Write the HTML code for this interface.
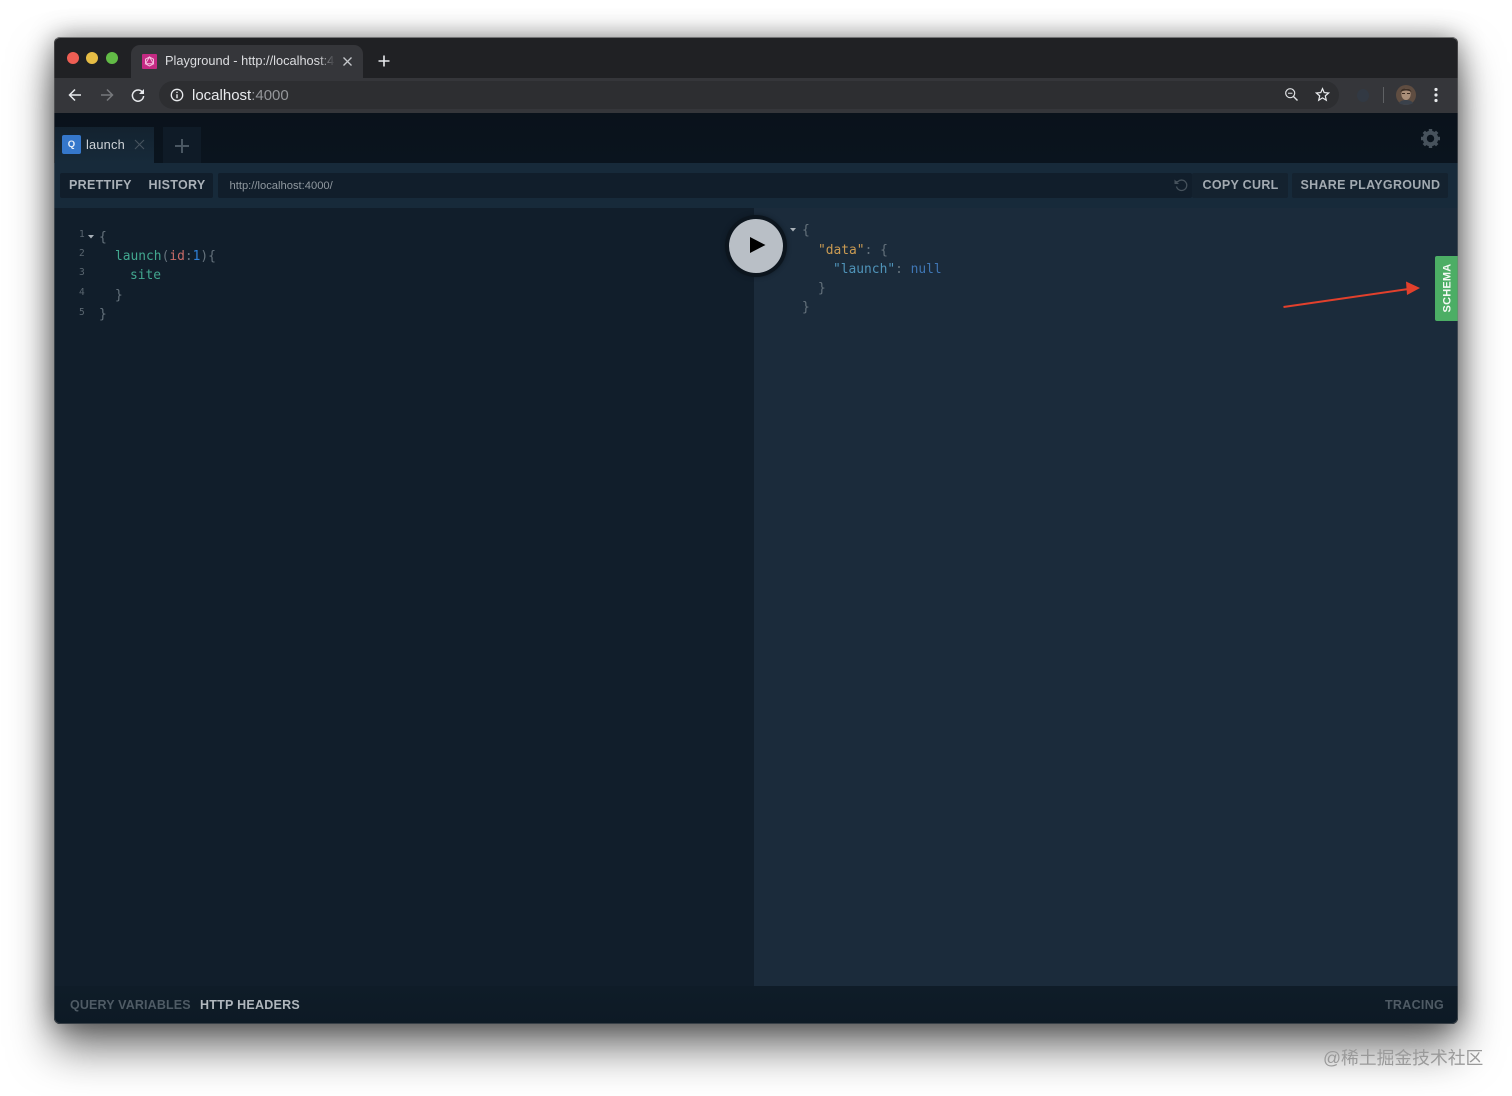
<!DOCTYPE html>
<html><head><meta charset="utf-8"><style>
html,body{margin:0;padding:0;width:1512px;height:1096px;overflow:hidden;background:#fff}
*{box-sizing:border-box}
.a{position:absolute;white-space:nowrap}
#w{position:absolute;left:54px;top:37px;width:1404px;height:987px;border-radius:6px;background:#202124;box-shadow:0 24px 44px rgba(0,0,0,.55),0 0 26px rgba(0,0,0,.42);overflow:hidden}
.t{font-family:"Liberation Sans",sans-serif}
.b{font-family:"Liberation Sans",sans-serif;font-weight:700;font-size:12.5px;letter-spacing:.3px;line-height:14px}
.m{font-family:"DejaVu Sans Mono","Liberation Mono",monospace;font-size:12.9px;line-height:16px;white-space:pre;position:absolute}
.n{font-family:"DejaVu Sans Mono",monospace;font-size:9.5px;line-height:12px;color:#5a6670;position:absolute}
</style></head><body>
<div id="w">
 <div class="a" style="left:0;top:41px;width:1404px;height:35px;background:#35363a"></div>
 <div class="a" style="left:77px;top:8px;width:232px;height:33px;background:#35363a;border-radius:9px 9px 0 0"></div>
 <div class="a" style="left:13px;top:15px;width:12px;height:12px;border-radius:50%;background:#ee5e54"></div>
 <div class="a" style="left:32px;top:15px;width:12px;height:12px;border-radius:50%;background:#e6bd45"></div>
 <div class="a" style="left:52px;top:15px;width:12px;height:12px;border-radius:50%;background:#62bb46"></div>
 <div class="a" style="left:88px;top:17px;width:15px;height:15px;background:#c52a83;border-radius:1px"></div>
 <svg class="a" style="left:88px;top:17px" width="15" height="15" viewBox="0 0 15 15"><path d="M7.5 3 11.5 5.2V9.800L7.500 12 3.500 9.800V5.200ZM7.500 3 3.500 9.800H11.500Z" fill="none" stroke="#f3bcdc" stroke-width="1"/></svg>
 <div class="a t" style="left:111px;top:16px;font-size:12.8px;line-height:16px;color:#dcdde0;width:172px;overflow:hidden">Playground - http://localhost:4000</div>
 <div class="a" style="left:264px;top:14px;width:20px;height:20px;background:linear-gradient(90deg,rgba(53,54,58,0),#35363a 85%)"></div>
 <svg class="a" style="left:288px;top:19px" width="11" height="11" viewBox="0 0 11 11"><path d="M1.500 1.500 9.500 9.500M9.500 1.500 1.500 9.500" stroke="#c5c7ca" stroke-width="1.300"/></svg>
 <svg class="a" style="left:323px;top:17px" width="14" height="14" viewBox="0 0 14 14"><path d="M7 1.500V12.500M1.500 7H12.500" stroke="#e8eaed" stroke-width="1.600"/></svg>
 <svg class="a" style="left:14px;top:51px" width="14" height="14" viewBox="0 0 14 14"><path d="M13 7H1.800M7 1.500 1.500 7 7 12.500" fill="none" stroke="#e8eaed" stroke-width="1.500"/></svg>
 <svg class="a" style="left:46px;top:51px" width="14" height="14" viewBox="0 0 14 14"><path d="M1 7H12.200M7 1.500 12.500 7 7 12.500" fill="none" stroke="#77797c" stroke-width="1.500"/></svg>
 <svg class="a" style="left:77px;top:51px" width="14" height="14" viewBox="0 0 14 14"><path d="M12 5A5.600 5.600 0 1 0 12.600 8" fill="none" stroke="#e8eaed" stroke-width="1.500"/><path d="M13 1V6H8Z" fill="#e8eaed"/></svg>
 <div class="a" style="left:105px;top:44px;width:1180px;height:28px;border-radius:14px;background:#2d2e31"></div>
 <svg class="a" style="left:116px;top:51px" width="14" height="14" viewBox="0 0 14 14"><circle cx="7" cy="7" r="5.700" fill="none" stroke="#e8eaed" stroke-width="1.300"/><path d="M7 6.200V10.200M7 3.800V5" stroke="#e8eaed" stroke-width="1.400"/></svg>
 <div class="a t" style="left:138px;top:50px;font-size:15px;line-height:18px;color:#e8eaed">localhost<span style="color:#94969a">:4000</span></div>
 <svg class="a" style="left:1230px;top:50px" width="15" height="15" viewBox="0 0 15 15"><circle cx="6.200" cy="6.200" r="4.500" fill="none" stroke="#dfe1e4" stroke-width="1.200"/><path d="M9.600 9.600 13.500 13.500" stroke="#dfe1e4" stroke-width="1.400"/><path d="M4 6.200H8.400" stroke="#dfe1e4" stroke-width="1"/></svg>
 <svg class="a" style="left:1261px;top:50px" width="15" height="15" viewBox="0 0 15 15"><path d="M7.500 1.600 9.200 5.600 13.600 6 10.300 8.900 11.300 13.200 7.500 10.900 3.700 13.200 4.700 8.900 1.400 6 5.800 5.600Z" fill="none" stroke="#e8eaed" stroke-width="1.200"/></svg>
 <div class="a" style="left:1303px;top:52px;width:12px;height:13px;border-radius:50%;background:#2f3c4a;opacity:.55"></div>
 <div class="a" style="left:1329px;top:50px;width:1px;height:16px;background:#5f6164"></div>
 <svg class="a" style="left:1342px;top:48px" width="20" height="20" viewBox="0 0 20 20"><circle cx="10" cy="10" r="10" fill="#5f4d41"/><ellipse cx="10" cy="9" rx="4.700" ry="6" fill="#a98e79"/><path d="M4.500 7C5 2.500 14 2 15.500 7 12 5 8 5 4.500 7Z" fill="#3d2f26"/><path d="M3 18C5 14 15 14 17 18 14 20.500 6 20.500 3 18Z" fill="#3a414b"/><path d="M6 8.500H9M11 8.500H14" stroke="#3a2a20" stroke-width="1"/></svg>
 <svg class="a" style="left:1379px;top:50px" width="6" height="16" viewBox="0 0 6 16"><circle cx="3" cy="2.500" r="1.600" fill="#e8eaed"/><circle cx="3" cy="8" r="1.600" fill="#e8eaed"/><circle cx="3" cy="13.500" r="1.600" fill="#e8eaed"/></svg>

 <!-- app -->
 <div class="a" style="left:0;top:76px;width:1404px;height:50px;background:linear-gradient(#0a121b,#0a141e)"></div>
 <div class="a" style="left:1px;top:90px;width:99px;height:36px;background:linear-gradient(180deg,#13222f,#172a3a)"></div>
 <div class="a" style="left:109px;top:90px;width:38px;height:36px;background:#0f1b27"></div>
 <div class="a t" style="left:8px;top:98px;width:19px;height:19px;border-radius:2px;background:#3577cb;color:#e6eef8;font-size:9.500px;font-weight:700;line-height:19px;text-align:center">Q</div>
 <div class="a t" style="left:32px;top:100px;font-size:12.800px;line-height:16px;color:#ced3d8;letter-spacing:.2px">launch</div>
 <svg class="a" style="left:80px;top:102px" width="11" height="11" viewBox="0 0 11 11"><path d="M1 1 10 10M10 1 1 10" stroke="#46535e" stroke-width="1.100"/></svg>
 <svg class="a" style="left:120px;top:101px" width="16" height="16" viewBox="0 0 16 16"><path d="M8 1V15M1 8H15" stroke="#4a5762" stroke-width="2"/></svg>
 <svg class="a" style="left:1366px;top:91px" width="21" height="21" viewBox="0 0 21 21"><circle cx="10.500" cy="10.500" r="5.700" fill="none" stroke="#47525c" stroke-width="4"/><path d="M10.500 1V4M10.500 17V20M1 10.500H4M17 10.500H20M3.800 3.800 5.900 5.900M15.100 15.100 17.200 17.200M17.200 3.800 15.100 5.900M5.900 15.100 3.800 17.200" stroke="#47525c" stroke-width="3.400"/></svg>

 <div class="a" style="left:0;top:126px;width:1404px;height:45px;background:#172a3a"></div>
 <div class="a" style="left:6px;top:136px;width:153px;height:25px;background:#111e2b;border-radius:2px"></div>
 <div class="a" style="left:164px;top:136px;width:974px;height:25px;background:#111e2b;border-radius:2px"></div>
 <div class="a" style="left:1138px;top:136px;width:96px;height:25px;background:#14222f;border-radius:2px"></div>
 <div class="a" style="left:1238px;top:136px;width:156px;height:25px;background:#14222f;border-radius:2px"></div>
 <div class="a b" style="left:15px;top:141px;color:#aab1b8">PRETTIFY</div>
 <div class="a b" style="left:94.500px;top:141px;color:#aab1b8">HISTORY</div>
 <div class="a t" style="left:175.500px;top:142px;font-size:11.200px;line-height:14px;color:#8f989f">http://localhost:4000/</div>
 <svg class="a" style="left:1119px;top:140px" width="16" height="16" viewBox="0 0 16 16"><path d="M3.500 9.500A5.200 5.200 0 1 0 5 4.500L2 5" fill="none" stroke="#46525c" stroke-width="1.300"/><path d="M1.500 2.500V7H6Z" fill="#46525c"/></svg>
 <div class="a b" style="left:1148.500px;top:141px;color:#a2aab1">COPY CURL</div>
 <div class="a b" style="left:1246.500px;top:141px;color:#a2aab1">SHARE PLAYGROUND</div>

 <div class="a" style="left:0;top:171px;width:700px;height:778px;background:#111e2b"></div>
 <div class="a" style="left:700px;top:171px;width:704px;height:778px;background:#1b2b3b"></div>
 <div class="a" style="left:0;top:949px;width:1404px;height:38px;background:linear-gradient(#0f1c28,#0d1a25)"></div>

 <div class="n" style="left:25px;top:192px">1</div>
 <div class="n" style="left:25px;top:211px">2</div>
 <div class="n" style="left:25px;top:230px">3</div>
 <div class="n" style="left:25px;top:250px">4</div>
 <div class="n" style="left:25px;top:270px">5</div>
 <svg class="a" style="left:33px;top:197px" width="8" height="6"><path d="M1 1H7L4 4.500Z" fill="#a9b1b8"/></svg>
 <div class="m" style="left:45px;top:193px;color:#65727c">{</div>
 <div class="m" style="left:61px;top:212px;color:#65727c"><span style="color:#42a78f">launch</span>(<span style="color:#c96b68">id</span>:<span style="color:#2f80d8">1</span>){</div>
 <div class="m" style="left:76px;top:231px;color:#42a78f">site</div>
 <div class="m" style="left:61px;top:251px;color:#65727c">}</div>
 <div class="m" style="left:45px;top:270px;color:#65727c">}</div>

 <svg class="a" style="left:735px;top:190px" width="8" height="6"><path d="M1 1H7L4 4.500Z" fill="#a9b1b8"/></svg>
 <div class="m" style="left:748px;top:186px;color:#65727c">{</div>
 <div class="m" style="left:764px;top:205.500px;color:#65727c"><span style="color:#c99a52">"data"</span>: {</div>
 <div class="m" style="left:779px;top:225px;color:#65727c"><span style="color:#4f93b8">"launch"</span>: <span style="color:#3f76b4">null</span></div>
 <div class="m" style="left:764px;top:244px;color:#65727c">}</div>
 <div class="m" style="left:748px;top:263px;color:#65727c">}</div>

 <div class="a" style="left:671px;top:178px;width:62px;height:62px;border-radius:50%;background:#0c151e;box-shadow:0 0 4px rgba(12,21,30,.7)"></div>
 <div class="a" style="left:675px;top:182px;width:54px;height:54px;border-radius:50%;background:#b9bfc6"></div>
 <svg class="a" style="left:695px;top:199px" width="18" height="18"><path d="M1 1 16.500 9 1 17Z" fill="#000"/></svg>

 <div class="a" style="left:1381px;top:219px;width:23px;height:65px;background:#4cae65;border-radius:2px 0 0 2px"></div>
 <div class="a t" style="left:1361px;top:244px;width:65px;height:14px;line-height:14px;text-align:center;font-size:11px;font-weight:700;color:#f2f8f3;letter-spacing:.2px;transform:rotate(-90deg)">SCHEMA</div>
 <svg class="a" style="left:1225px;top:240px" width="145" height="35"><path d="M4.500 30 133 11.500" stroke="#e2402c" stroke-width="2"/><path d="M127 4.500 141 11 128 18Z" fill="#e2402c"/></svg>

 <div class="a b" style="left:16px;top:960.500px;color:#4f5b65;letter-spacing:.15px">QUERY VARIABLES</div>
 <div class="a b" style="left:146px;top:960.500px;color:#b0b7bd;letter-spacing:.25px">HTTP HEADERS</div>
 <div class="a b" style="left:1331px;top:960.500px;color:#4f5b65;letter-spacing:.3px">TRACING</div>
 <div class="a" style="left:0;top:0;width:1404px;height:987px;border-radius:6px;border:1px solid rgba(120,120,120,.4);border-top-color:rgba(170,170,170,.6)"></div>
</div>
<div class="a" style="left:1323px;top:1047px;font-family:'Liberation Sans','Noto Sans CJK SC',sans-serif;font-size:17.800px;line-height:22px;color:#9a9a9a">@稀土掘金技术社区</div>
</body></html>
